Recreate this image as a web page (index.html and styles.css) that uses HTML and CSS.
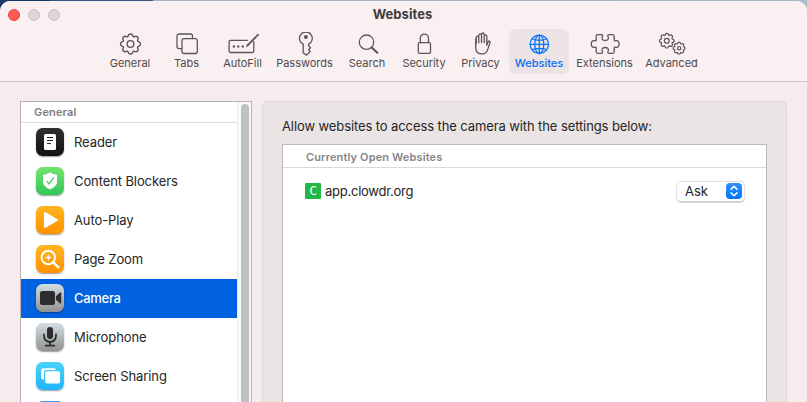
FILE: index.html
```html
<!DOCTYPE html>
<html lang="en">
<head>
<meta charset="utf-8">
<title>Websites</title>
<link rel="stylesheet" href="styles.css">
</head>
<body>
<svg class="defs" width="0" height="0">
  <defs>
    <path id="gear" d="M-2.6-7.300Q-2-10 0-10T2.600-7.300L3.320-7Q5.660-8.490 7.070-7.070T7-3.320L7.300-2.600Q10-2 10 0T7.300 2.600L7 3.320Q8.490 5.660 7.070 7.070T3.320 7L2.600 7.300Q2 10 0 10T-2.600 7.300L-3.320 7Q-5.660 8.490-7.070 7.070T-7 3.320L-7.300 2.600Q-10 2-10 0T-7.300-2.600L-7-3.320Q-8.490-5.660-7.070-7.070T-3.320-7Z"/>
  </defs>
</svg>
<div class="window">
  <header class="titlebar">
    <div class="lights"><i class="light close"></i><i class="light"></i><i class="light"></i></div>
    <h1 class="title">Websites</h1>
    <nav class="toolbar">
      <a class="tool general"><svg viewBox="-16 -12 32 24"><use href="#gear" transform="translate(.5 0)"/><circle cx=".5" r="3.400"/></svg><span>General</span></a>
      <a class="tool tabs"><svg viewBox="0 0 32 24"><path d="M10.500 16.600H8a2 2 0 0 1-2-2V4a2 2 0 0 1 2-2h11.500a2 2 0 0 1 2 2v2.300"/><rect x="11" y="6.700" width="15.300" height="14.800" rx="2"/></svg><span>Tabs</span></a>
      <a class="tool autofill"><svg viewBox="0 0 32 24"><path d="M20.500 8.300H3.700a1.600 1.600 0 0 0-1.600 1.600v9a1.600 1.600 0 0 0 1.600 1.600h21.500a1.600 1.600 0 0 0 1.600-1.600V9.500"/><path d="M21 12.800L29 4.800" stroke-width="1.900"/><path d="M30.300 3.500l.6-.6" stroke-width="2"/><path class="solid" d="M18.700 15.200l1.400-3.200 1.900 1.700zM5.700 14.500a1.200 1.200 0 1 0 2.400 0 1.200 1.200 0 1 0-2.400 0M10.100 14.500a1.200 1.200 0 1 0 2.400 0 1.200 1.200 0 1 0-2.400 0M14.500 14.500a1.200 1.200 0 1 0 2.400 0 1.200 1.200 0 1 0-2.400 0"/></svg><span>AutoFill</span></a>
      <a class="tool passwords"><svg viewBox="0 0 32 24"><path d="M14.200 12.200a6.400 6.400 0 1 1 5.400 0v1.500l1.900 2-1.900 2 1.500 1.800-3.500 3.600-3.400-2.400z"/><circle class="solid" cx="16.900" cy="5" r="2"/></svg><span>Passwords</span></a>
      <a class="tool search"><svg viewBox="0 0 32 24"><circle cx="15.500" cy="10.200" r="7.200"/><path d="M20.700 15.500l5.600 5.300" stroke-width="2.100"/></svg><span>Search</span></a>
      <a class="tool security"><svg viewBox="0 0 32 24"><rect x="10.300" y="10.700" width="12.200" height="10.600" rx="1.400"/><path d="M12.300 10.500V6.200a4.100 4.100 0 0 1 8.200 0v4.300"/></svg><span>Security</span></a>
      <a class="tool privacy"><svg viewBox="0 0 32 24"><path d="M11.300 11.800V5.600c0-1.900 2.500-1.900 2.500 0v5.100V3.300c0-2 2.700-2 2.700 0v7.200-8c0-2 2.700-2 2.700 0v8.200V4.300c0-1.900 2.600-1.900 2.600 0v9l1.200-3.200c.6-1.700 2.500-1.300 2 .5l-2.400 7.300c-.9 2.700-2.400 4-5.200 4-4.200 0-6.700-2.300-6.700-6.500V7.500q0-1.300.6-1.500"/></svg><span>Privacy</span></a>
      <a class="tool websites active"><svg viewBox="-16 -12 32 24"><g transform="translate(.3 .3)"><circle r="9.200"/><ellipse rx="4.500" ry="9.200"/><path d="M0-9.200V9.200M-9.200 0H9.200M-7.200-5.300Q0-2.800 7.200-5.300M-7.200 5.300Q0 2.800 7.200 5.300"/></g></svg><span>Websites</span></a>
      <a class="tool extensions"><svg viewBox="0 0 32 24"><path d="M8.700 2.700h3.700c1.600 0 1.300 1.400.8 2.300-.7 1.400.3 3.500 3 3.500s3.700-2.100 3-3.500c-.5-.9-.8-2.300.8-2.300h3.700A1.500 1.500 0 0 1 25.200 4.200v3.700c0 1.300 1 1.200 2 .8 1.400-.5 2.900.7 2.900 3.300s-1.500 3.800-2.900 3.300c-1-.4-2-.5-2 .8v3.700a1.500 1.500 0 0 1-1.500 1.500H20c-1.600 0-1.300-1.400-.8-2.300.7-1.400-.3-3.500-3-3.500s-3.700 2.100-3 3.500c.5.900.8 2.300-.8 2.300H8.700a1.500 1.500 0 0 1-1.500-1.500v-3.700c0-1.300-1-1.200-2-.8-1.400.5-2.900-.7-2.900-3.300s1.500-3.800 2.900-3.300c1 .4 2 .5 2-.8V4.200a1.500 1.500 0 0 1 1.500-1.500z"/></svg><span>Extensions</span></a>
      <a class="tool advanced"><svg viewBox="0 0 32 24"><g transform="translate(10.800 8.700) scale(.74)" stroke-width="1.700"><use href="#gear"/><circle r="3.300"/></g><g transform="translate(23.100 16.200) scale(.6)" stroke-width="2"><use href="#gear"/><circle r="2.800"/></g></svg><span>Advanced</span></a>
    </nav>
  </header>
  <main class="content">
    <aside class="sidebar">
      <div class="list">
        <h2 class="group">General</h2>
        <a class="row"><svg class="icon dark" viewBox="0 0 28 28"><rect x="8" y="6" width="12" height="16" rx="1.500" fill="#fff"/><path d="M11 9.500h6M11 12.500h6M11 15.500h4" stroke="#222" stroke-width="1.100"/></svg>Reader</a>
        <a class="row"><svg class="icon green" viewBox="0 0 28 28"><path d="M14 5.200c2 1.500 4.500 2.300 7 2.500v7c0 3.500-3.200 6-7 7.700-3.800-1.700-7-4.200-7-7.700v-7c2.500-.2 5-1 7-2.500z" fill="#fff"/><path d="M10.500 14l2.600 3 4.600-6.500" fill="none" stroke="#4bd265" stroke-width="1.300"/></svg>Content Blockers</a>
        <a class="row"><svg class="icon orange" viewBox="0 0 28 28"><path d="M8.800 6.800v14.400L21 14z" fill="#fff" stroke="#fff" stroke-width="1.600" stroke-linejoin="round"/></svg>Auto-Play</a>
        <a class="row"><svg class="icon orange" viewBox="0 0 28 28"><g fill="none" stroke="#fff"><circle cx="12.300" cy="12.500" r="6.700" stroke-width="1.900"/><path d="M17.300 17.300l5 5" stroke-width="2.500" stroke-linecap="round"/><path d="M9.500 12.500h5.600M12.300 9.700v5.600" stroke-width="1.300"/></g></svg>Page Zoom</a>
        <a class="row selected"><svg class="icon gray" viewBox="0 0 28 28"><rect x="4" y="7" width="15" height="14" rx="2.300"/><path d="M20 12.300l4-3.700q1.200-.6 1.200.7v9.400q0 1.300-1.200.7l-4-3.700z"/></svg>Camera</a>
        <a class="row"><svg class="icon gray" viewBox="0 0 28 28"><rect x="11" y="4" width="6" height="12" rx="3"/><path d="M8 11.500V13a6 6 0 0 0 12 0v-1.500M14 19v3.500M9.700 22.700h8.600" fill="none" stroke="#2d2d2d" stroke-width="1.800" stroke-linecap="round"/></svg>Microphone</a>
        <a class="row"><svg class="icon blue" viewBox="0 0 28 28"><path d="M8 17.500H7A1.800 1.800 0 0 1 5.200 15.700V8A1.800 1.800 0 0 1 7 6.200h11A1.800 1.800 0 0 1 19.800 8H10a2 2 0 0 0-2 2z" fill="#fff"/><rect x="9.200" y="9.200" width="14.800" height="12.300" rx="1.800" fill="#fff"/></svg>Screen Sharing</a>
        <a class="row"><svg class="icon location" viewBox="0 0 28 28"></svg></a>
      </div>
      <div class="scroller"><div class="thumb"></div></div>
    </aside>
    <section class="panel">
      <p class="intro">Allow websites to access the camera with the settings below:</p>
      <div class="sites">
        <h2 class="sites-head">Currently Open Websites</h2>
        <div class="site"><span class="favicon">C</span><span class="domain">app.clowdr.org</span>
          <button class="select"><span>Ask</span><svg viewBox="0 0 16 16"><path d="M5 6.200L8 3.400l3 2.800M5 9.900l3 2.800 3-2.800"/></svg></button>
        </div>
      </div>
    </section>
  </main>
</div>
</body>
</html>
```
FILE: styles.css
```css
* { box-sizing: border-box; }
body {
  margin: 0;
  height: 402px;
  overflow: hidden;
  background: linear-gradient(90deg, #17396c 0 50px, #35557f 50px 152px, #a9b2c3 154px 600px, #a8bdc9);
  font: 13px/16px Inter, "Liberation Sans", sans-serif;
  letter-spacing: -.1px;
  color: #262425;
}
.defs { display: block; }
.window {
  margin-top: 1px;
  height: 401px;
  border-radius: 10px 10px 0 0;
  overflow: hidden;
  background: #f6eced;
  display: flex;
  flex-direction: column;
}
.titlebar {
  height: 81px;
  flex: none;
  display: grid;
  grid-template: 28px 52px / 102px 1fr 102px;
  background: #faf0f1;
  border-bottom: 1px solid #cfc5c6;
}
.lights { display: flex; gap: 8px; padding: 8px 0 0 8px; }
.light { width: 12px; height: 12px; border-radius: 50%; background: #ddd5d6; border: 1px solid #c7bfc0; }
.close { background: #ff5b52; border-color: #e2463f; }
.title { margin: 5px 2px 0 0; text-align: center; font-size: 13px; font-weight: 700; line-height: 16px; color: #403c3d; letter-spacing: .05px; }
.toolbar { grid-column: 2 / 4; display: flex; }
.tool {
  flex: none;
  height: 45px;
  padding-top: 3px;
  border-radius: 6px;
  display: flex;
  flex-direction: column;
  align-items: center;
  font-size: 11px;
  line-height: 14px;
  color: #4f4b4c;
  letter-spacing: 0;
}
.tool svg { width: 32px; height: 24px; fill: none; stroke: #5b5758; stroke-width: 1.3; stroke-linejoin: round; stroke-linecap: round; }
.tool .solid { fill: #5b5758; stroke: none; }
.tool span { white-space: nowrap; }
.general { width: 56px; }
.tabs { width: 57px; }
.autofill { width: 55px; }
.passwords { width: 69px; }
.search { width: 56px; }
.security { width: 58px; }
.privacy { width: 55px; margin-right: 1px; }
.websites { width: 60px; }
.extensions { width: 71px; }
.advanced { width: 63px; }
.active { background: #ece3e4; color: #0a70f0; font-weight: 500; }
.active svg { stroke: #0a75f5; }
.content { flex: 1; min-height: 0; display: flex; gap: 10px; padding: 19px 20px 0; }
.sidebar { width: 232px; display: flex; background: #fff; border: 1px solid #b9b1b2; border-bottom: 0; overflow: hidden; }
.list { width: 216px; }
.group { margin: 0; height: 21px; padding: 2px 13px; border-bottom: 1px solid #dedede; font-size: 11px; line-height: 16px; font-weight: 600; color: #7d7d7d; letter-spacing: .15px; }
.row { height: 39px; display: flex; align-items: center; gap: 10px; padding: 0 0 2px 15px; }
.icon { width: 28px; height: 28px; flex: none; border-radius: 6.500px; box-shadow: 0 1px 1.500px rgba(0,0,0,.4); }
.dark { background: linear-gradient(#303030, #111); }
.green { background: linear-gradient(#70e56c, #34c65a); }
.orange { background: linear-gradient(#ffb51e, #ff9200); }
.gray { background: linear-gradient(#d3dde2, #929292); fill: #2d2d2d; }
.blue { background: linear-gradient(#4bd2fb, #20b4fc); }
.location { background: #3a9cf5; }
.selected { background: #0162e1; color: #fff; font-weight: 500; letter-spacing: -.3px; }
.scroller { width: 14px; padding: 2px 2px 0 3px; border-left: 1px solid #e8e8e8; background: #fafafa; }
.thumb { width: 8px; height: 320px; border-radius: 4px; background: #c1c1c1; }
.panel { width: 525px; padding: 16px 19px 0; border: 1px solid #e1d8d9; border-bottom: 0; border-radius: 5px 5px 0 0; background: #ebe4e4; }
.intro { margin: 0; white-space: nowrap; }
.sites { margin-top: 10px; height: 280px; background: #fff; border: 1px solid #bdb9b9; }
.sites-head { margin: 0; height: 23px; padding: 4px 23px; border-bottom: 1px solid #dadada; font-size: 11px; line-height: 16px; font-weight: 600; color: #858585; letter-spacing: .13px; }
.site { height: 46px; display: flex; align-items: center; padding: 0 21px 0 22px; }
.favicon { width: 16px; height: 16px; border-radius: 1px; background: #20b848; color: #fff; font: 13px/16px "DejaVu Sans Mono", monospace; text-align: center; }
.domain { margin-left: 4px; letter-spacing: -.25px; }
.select { margin-left: auto; width: 69px; height: 21px; padding: 0 2px 0 8px; display: flex; align-items: center; justify-content: space-between; border: 1px solid #e2e2e2; border-bottom-color: #c9c9c9; border-radius: 5px; background: #fff; box-shadow: 0 .5px 1px rgba(0,0,0,.15); font: inherit; color: inherit; }
.select svg { width: 16px; height: 16px; border-radius: 4px; background: linear-gradient(#2f92fb, #0574fa); fill: none; stroke: #fff; stroke-width: 1.5; stroke-linecap: round; stroke-linejoin: round; }
```
